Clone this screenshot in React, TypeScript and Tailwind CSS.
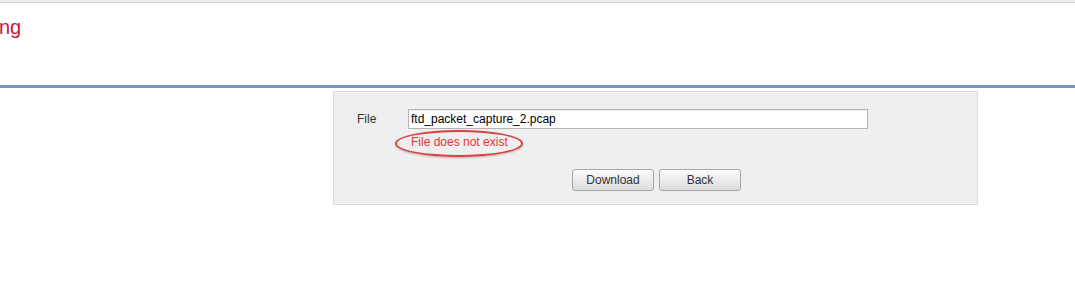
export default function App() {
  const font = { fontFamily: '"Liberation Sans", Arial, sans-serif' };
  return (
    <div className="relative h-[300px] w-[1075px] overflow-hidden bg-white" style={font}>
      <div className="h-[3px] w-full border-b border-[#d6d6d6] bg-[#ececec]" />
      <div className="h-[82px] pt-[13px]">
        <p className="-ml-[1px] text-[20px] leading-[22px] text-[#c8163a]">ng</p>
      </div>
      <div className="h-[3px] w-full bg-[#7595c4]" />
      <div className="ml-[333px] mt-[3px] h-[114px] w-[645px] border border-[#dadada] bg-[#efefef]">
        <div className="flex items-center pt-[17px]">
          <span className="ml-[23px] w-[51px] text-[12px] text-[#333]">File</span>
          <div className="flex h-[20px] w-[460px] items-center border border-[#b4b4b4] bg-white px-[2px] text-[12px] text-black shadow-[inset_0_1px_1px_rgba(0,0,0,0.08)]">
            ftd_packet_capture_2.pcap
          </div>
        </div>
        <div className="relative ml-[61px] mt-[1px] h-[27px] w-[128px]">
          <div className="absolute inset-0 rounded-[50%] border-2 border-[#d9423f] shadow-[0_1px_2px_rgba(0,0,0,0.25)]" />
          <span className="absolute left-[16px] top-[5px] text-[12px] leading-[15px] text-[#e3323b]">
            File does not exist
          </span>
        </div>
        <div className="ml-[238px] mt-[12px] flex gap-[5px]">
          <button className="h-[22px] w-[82px] rounded-[3px] border border-[#a8a8a8] bg-gradient-to-b from-[#fbfbfb] to-[#dcdcdc] text-[12px] text-[#333]">
            Download
          </button>
          <button className="h-[22px] w-[82px] rounded-[3px] border border-[#a8a8a8] bg-gradient-to-b from-[#fbfbfb] to-[#dcdcdc] text-[12px] text-[#333]">
            Back
          </button>
        </div>
      </div>
    </div>
  );
}
